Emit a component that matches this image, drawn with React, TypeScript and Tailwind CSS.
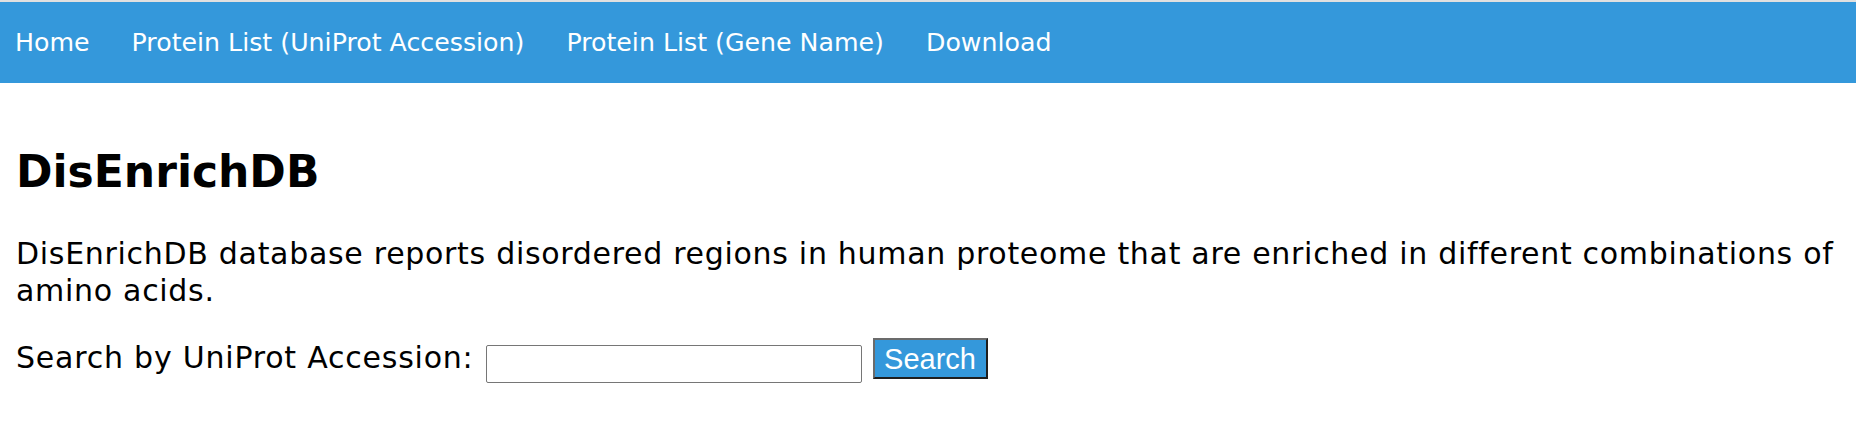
import React from "react";

const navLinks = [
  "Home",
  "Protein List (UniProt Accession)",
  "Protein List (Gene Name)",
  "Download",
];

const NavBar: React.FC = () => {
  return (
    <nav className="flex items-center h-[81px] bg-[#3498db] pl-[15px] gap-[42px] border-t-2 border-[#e0e0e0] box-content">
      {navLinks.map((link) => (
        <a key={link} href="#" className="text-white text-[25.25px] leading-[30px]">
          {link}
        </a>
      ))}
    </nav>
  );
};

const SearchForm: React.FC = () => {
  return (
    <div className="flex items-start mt-[29px]">
      <label className="text-[30px] leading-[37px] tracking-[0.78px] mt-[1px] text-black">
        Search by UniProt Accession:
      </label>
      <input
        type="text"
        className="ml-[12px] mt-[7px] w-[376px] h-[38px] border border-[#767676] rounded-[2px] bg-white"
      />
      <button className="ml-[11px] w-[115px] h-[41px] bg-[#3498db] text-white text-[29px] leading-[30px] font-['Liberation_Sans',Arial,sans-serif] border-2 border-t-[#6b6b6b] border-l-[#6b6b6b] border-b-[#1e1e1e] border-r-[#1e1e1e]">
        Search
      </button>
    </div>
  );
};

export default function App() {
  return (
    <div className="min-h-[431px] bg-white font-['DejaVu_Sans',Verdana,sans-serif]">
      <NavBar />
      <main className="pl-4 pr-4">
        <h1 className="mt-[63px] text-[44px] leading-[52px] font-bold text-black">DisEnrichDB</h1>
        <p className="mt-[37px] text-[30px] leading-[37px] tracking-[0.7px] text-black">
          DisEnrichDB database reports disordered regions in human proteome that are enriched in
          different combinations of amino acids.
        </p>
        <SearchForm />
      </main>
    </div>
  );
}
